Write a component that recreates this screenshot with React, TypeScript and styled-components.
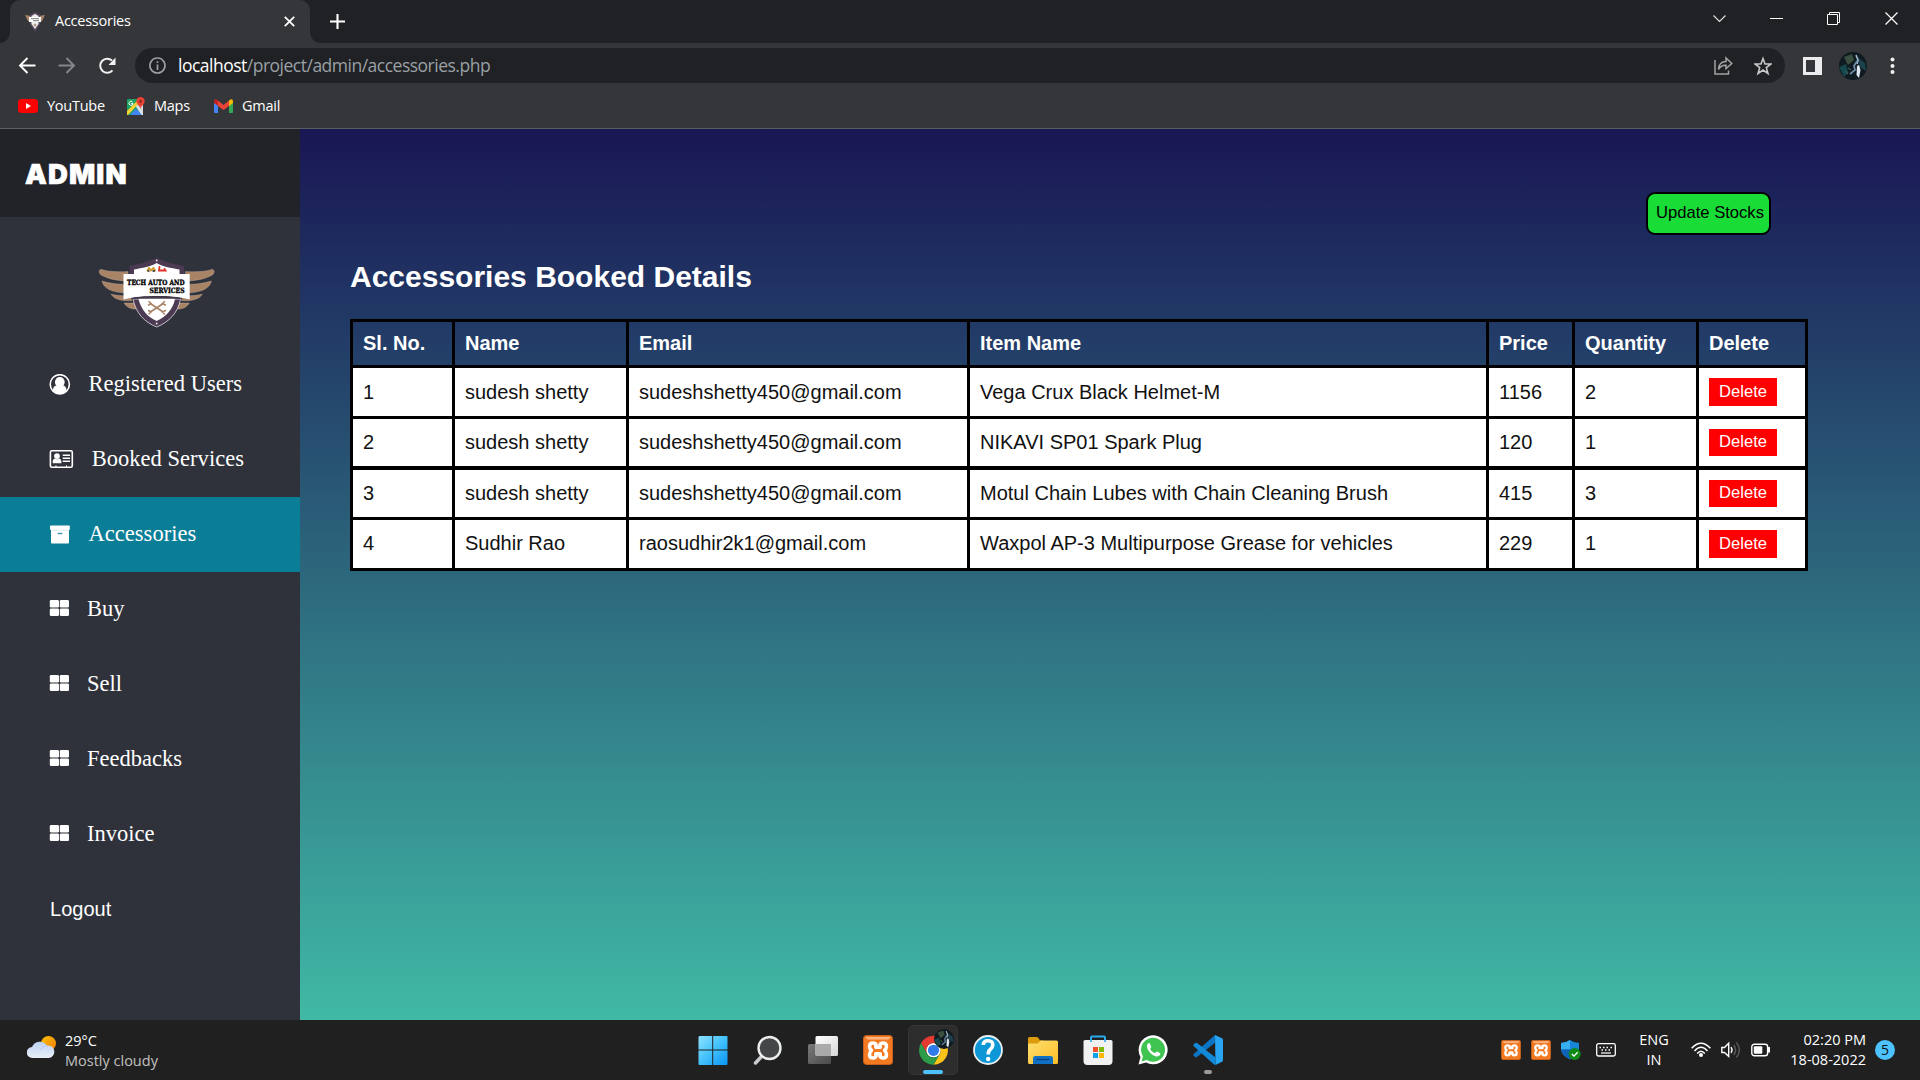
import React from 'react';
import styled, { createGlobalStyle } from 'styled-components';

const UI = `"Open Sans", "Noto Sans", sans-serif`;
const ARIAL = `"Liberation Sans", Arial, sans-serif`;
const TIMES = `"Liberation Serif", "Times New Roman", serif`;

const Global = createGlobalStyle`
  * { box-sizing: border-box; }
  body { margin: 0; background: #202020; }
  svg { display: block; flex: none; }
  button { font: inherit; border: 0; margin: 0; }
`;

const Screen = styled.div`
  width: 1920px;
  height: 1080px;
  display: flex;
  flex-direction: column;
  overflow: hidden;
  font-family: ${UI};
`;

/* ---------- browser chrome ---------- */

const TabStrip = styled.div`
  height: 43px;
  display: flex;
  background: #202124;
`;

const Tab = styled.div`
  position: relative;
  width: 300px;
  height: 43px;
  margin-left: 10px;
  padding: 0 15px 0 15px;
  display: flex;
  align-items: center;
  background: #35363a;
  border-radius: 10px 10px 0 0;
  &::before, &::after {
    content: '';
    position: absolute;
    bottom: 0;
    width: 10px;
    height: 10px;
  }
  &::before {
    left: -10px;
    background: radial-gradient(circle at 0 0, transparent 9.5px, #35363a 10px);
  }
  &::after {
    right: -10px;
    background: radial-gradient(circle at 100% 0, transparent 9.5px, #35363a 10px);
  }
`;

const TabTitle = styled.span`
  flex: 1;
  margin-left: 10px;
  color: #fff;
  font-size: 14.5px;
  line-height: 20px;
  letter-spacing: -0.25px;
  padding-bottom: 1px;
`;

const NewTab = styled.div`
  flex: 1;
  display: flex;
  padding: 14px 0 0 20px;
`;

const WindowButtons = styled.div`
  display: flex;
  gap: 44px;
  padding: 12px 22px 0 0;
`;

const Toolbar = styled.div`
  height: 45px;
  display: flex;
  align-items: center;
  padding: 0 18px 0 18px;
  background: #35363a;
`;

const NavButtons = styled.div`
  display: flex;
  gap: 22px;
  width: 117px;
`;

const Omnibox = styled.div`
  width: 1650px;
  height: 35px;
  display: flex;
  align-items: center;
  padding: 0 13px 0 14px;
  border-radius: 18px;
  background: #202124;
`;

const Url = styled.span`
  flex: 1;
  margin-left: 12px;
  padding-bottom: 1px;
  color: #9aa0a6;
  font-size: 17.5px;
  line-height: 24px;
  letter-spacing: -0.5px;
  b { color: #fff; font-weight: 400; }
`;

const OmniActions = styled.div`
  display: flex;
  gap: 20px;
`;

const ToolbarEnd = styled.div`
  display: flex;
  align-items: center;
  margin-left: 18px;
`;

const Bookmarks = styled.div`
  height: 41px;
  display: flex;
  align-items: center;
  gap: 21px;
  padding: 0 18px 5px;
  background: #35363a;
  border-bottom: 1px solid #5d5e62;
`;

const Bookmark = styled.div<{ $w: number }>`
  width: ${(p) => p.$w}px;
  display: flex;
  align-items: center;
  gap: 9px;
  color: #fff;
  font-size: 14.5px;
  line-height: 20px;
  letter-spacing: -0.25px;
  white-space: nowrap;
`;

/* ---------- page ---------- */

const Page = styled.div`
  height: 891px;
  display: flex;
`;

const Sidebar = styled.aside`
  width: 300px;
  background: #2f323b;
`;

const Brand = styled.div`
  height: 88px;
  padding-left: 25px;
  background: #222328;
  color: #fff;
  font: 900 27.5px/90px Inter, sans-serif;
  letter-spacing: 1.1px;
  -webkit-text-stroke: 0.6px #fff;
`;

const LogoBox = styled.div`
  height: 130px;
  padding: 40px 0 0 98px;
`;

const Item = styled.div<{ $active?: boolean }>`
  height: 75px;
  display: flex;
  align-items: center;
  gap: 17px;
  padding-left: 49px;
  color: #fff;
  font: 22.5px/26px ${TIMES};
  letter-spacing: 0.03px;
  background: ${(p) => (p.$active ? '#0b7e97' : 'transparent')};
`;

const ItemLabel = styled.span`
  padding-bottom: 2px;
`;

const Logout = styled(Item)`
  padding-left: 50px;
  font: 20px/24px ${ARIAL};
`;

const Content = styled.main`
  flex: 1;
  padding: 63px 112px 0 50px;
  background: linear-gradient(to bottom, #191654, #43c6ac 962px);
  display: flex;
  flex-direction: column;
  font-family: ${ARIAL};
`;

const UpdateButton = styled.button`
  align-self: flex-end;
  width: 125px;
  height: 43px;
  margin-right: 37px;
  padding: 0 0 2px 3px;
  border: 2px solid #000;
  border-radius: 9px;
  background: #19dc37;
  color: #000;
  font-size: 16.6px;
  white-space: nowrap;
`;

const Heading = styled.h1`
  margin: 25px 0 0;
  height: 59px;
  color: #fff;
  font-size: 30px;
  line-height: 34px;
`;

const Table = styled.div`
  width: 1458px;
  border-right: 3px solid #000;
  border-bottom: 3px solid #000;
`;

const Row = styled.div<{ $h: number; $line?: number; $head?: boolean }>`
  display: grid;
  grid-template-columns: 102px 174px 341px 519px 86px 124px 109px;
  height: ${(p) => p.$h + (p.$line ?? 3)}px;
  border-top: ${(p) => p.$line ?? 3}px solid #000;
  background: ${(p) => (p.$head ? 'transparent' : '#fff')};
  color: ${(p) => (p.$head ? '#fff' : '#111')};
  font-weight: ${(p) => (p.$head ? 700 : 400)};
`;

const Cell = styled.div`
  display: flex;
  align-items: flex-start;
  padding: 10px 0 0 10px;
  border-left: 3px solid #000;
  font-size: 20px;
  line-height: 23px;
  white-space: nowrap;
`;

const TextCell = styled(Cell)<{ $top: number }>`
  padding-top: ${(p) => p.$top}px;
`;

const DeleteButton = styled.button<{ $h: number }>`
  width: 68px;
  height: ${(p) => p.$h}px;
  padding: 0 0 1px;
  background: #f00;
  color: #fff;
  font-size: 16.6px;
  line-height: 20px;
`;

/* ---------- taskbar ---------- */

const Taskbar = styled.footer`
  height: 60px;
  display: flex;
  background: #202020;
  color: #fff;
`;

const Weather = styled.div`
  width: 696px;
  display: flex;
  padding: 11px 0 0 27px;
  gap: 9px;
`;

const Lines = styled.div<{ $align?: string }>`
  display: flex;
  flex-direction: column;
  align-items: ${(p) => p.$align ?? 'flex-start'};
  font-size: 14.5px;
  line-height: 20px;
  white-space: nowrap;
`;

const Muted = styled.span`
  color: #c0c0c0;
`;

const WeatherIcon = styled.div`
  padding-top: 5px;
`;

const Apps = styled.div`
  display: flex;
  gap: 5px;
  padding-top: 5px;
  margin-left: -8px;
  flex: 1;
`;

const AppTile = styled.div<{ $active?: boolean }>`
  width: 50px;
  height: 50px;
  display: flex;
  flex-direction: column;
  align-items: center;
  padding-top: ${(p) => (p.$active ? 9 : 10)}px;
  border-radius: 5px;
  background: ${(p) => (p.$active ? '#2d2d2d' : 'transparent')};
  border: ${(p) => (p.$active ? '1px solid #353535' : '0')};
  position: relative;
`;

const Indicator = styled.i<{ $w: number; $color: string }>`
  width: ${(p) => p.$w}px;
  height: 4px;
  margin-top: 5px;
  border-radius: 2px;
  background: ${(p) => p.$color};
`;

const ProfileBadge = styled.span`
  position: absolute;
  top: 3px;
  right: 3px;
`;

const Tray = styled.div`
  display: flex;
  align-items: center;
  padding-right: 25px;
`;

const TrayIcons = styled.div<{ $gap: number; $ml?: number }>`
  display: flex;
  align-items: center;
  gap: ${(p) => p.$gap}px;
  margin-left: ${(p) => p.$ml ?? 0}px;
`;

const Language = styled(Lines)`
  width: 28px;
  margin-left: 24px;
`;

const Clock = styled(Lines)`
  margin-left: 19px;
  width: 76px;
`;

const Count = styled.div`
  width: 20px;
  height: 20px;
  margin-left: 9px;
  border-radius: 50%;
  background: #4cc2ff;
  color: #111;
  font-size: 14px;
  line-height: 20px;
  text-align: center;
`;

/* ---------- drawings ---------- */

const feathers = [
  'M30 14.500 C18 15 9 14.500 4 12.500 C1 12 0 15 3 18 C11 22.500 21 24 30 24Z',
  'M30 27 C20 27.500 12 26.500 4 24 C5 31 14 36 30 36Z',
  'M32 38.500 C24 39 18 38.500 13 37 C16 42.500 24 44.500 34 43.500Z',
  'M36 46 L26 46 C29 51 34 52.500 39 52Z',
];

const Wing = () => (
  <g fill="#a98366" stroke="#d6c5b6" strokeWidth=".3">
    {feathers.map((d) => <path key={d} d={d} />)}
  </g>
);

const Logo = ({ w = 117, h = 72 }: { w?: number; h?: number }) => (
  <svg width={w} height={h} viewBox="0 0 117 72" preserveAspectRatio="none">
    <Wing />
    <g transform="translate(117.4 0) scale(-1 1)"><Wing /></g>
    <path d="M58.700 1 L72 6 L86 9 V18 H31.500 V9 L45 6Z" fill="#4b3a52" />
    <path d="M58.700 6 C53 9.500 44 11 36 12.500 V18 H81.500 V12.500 C73 11 64 9.500 58.700 6Z" fill="#fff" />
    <path d="M35 42 H82.500 C80 56 71 65 58.700 70 C46 65 38 56 35 42Z" fill="#4b3a52" stroke="#e3dfe4" strokeWidth=".8" />
    <path d="M40.500 42 H77 C75 52 68 60 58.700 64 C49 60 43 52 40.500 42Z" fill="#fff" />
    <path d="M25.500 17 H91.700 V42.500 C80 39.500 70 39 58.700 39 C47 39 37 39.500 25.500 42.500Z" fill="#fff" />
    <path d="M35 41.600 C45 39.800 72 39.800 82.500 41.600" stroke="#4b3a52" strokeWidth="1.400" fill="none" />
    <g strokeLinecap="round" fill="none">
      <path d="M53 47 L64.500 54.500 M64.500 47 L53 54.500" stroke="#a98366" strokeWidth="1.800" />
      <path d="M51 44.500 L53 46.500 L50.500 48 M66.500 44.500 L64.500 46.500 L67.500 48 M51 57 L53 55 L50.500 53.500 M66.500 57 L64.500 55 L67.500 53.500" stroke="#a98366" strokeWidth="1.500" />
      <path d="M49.500 13.500 L51 11 L53 13.500 L55.500 11 L57 13.500" stroke="#d1982a" strokeWidth="1.800" />
      <path d="M50 14 h1 M55 14 h1.500" stroke="#222" strokeWidth="1.300" />
      <path d="M61.500 10 L61 13.500 H67.500 L66.500 12" stroke="#e03328" strokeWidth="1.800" />
    </g>
    <circle cx="58.700" cy="3.500" r="1" fill="#ddd" />
    <circle cx="58.700" cy="66.500" r="1" fill="#ddd" />
    <g fontFamily="DejaVu Serif, serif" fontWeight="700" fontSize="7.200" fill="#000" stroke="#000" strokeWidth=".35" textAnchor="end">
      <text x="86.500" y="28.300" textLength="57.500" lengthAdjust="spacingAndGlyphs">TECH AUTO AND</text>
      <text x="86.500" y="35.500" textLength="35" lengthAdjust="spacingAndGlyphs">SERVICES</text>
    </g>
  </svg>
);

const Favicon = () => (
  <svg width="20" height="20" viewBox="0 0 20 20">
    <path d="M0 3 L6 4 V11 L3 9Z M20 3 L14 4 V11 L17 9Z" fill="#a98366" />
    <path d="M10 0 L15 3 V12 L10 19.500 L5 12 V3Z" fill="#5b4a62" />
    <path d="M10 2 L13.500 4 V12 L10 17 L6.500 12 V4Z" fill="#eee" />
    <path d="M4 5 H16 V10 H4Z" fill="#fff" />
    <path d="M6 6.700 h8 M8 8.700 h6" stroke="#777" strokeWidth="1" />
    <circle cx="10" cy="13" r="1.500" fill="#b79c88" />
  </svg>
);

const Line = ({ d, w = 20, h = 20, c = '#fff', s = 2 }: { d: string; w?: number; h?: number; c?: string; s?: number }) => (
  <svg width={w} height={h} viewBox={`0 0 ${w} ${h}`} fill="none" stroke={c} strokeWidth={s}><path d={d} /></svg>
);

const Avatar = ({ size }: { size: number }) => (
  <svg width={size} height={size} viewBox="0 0 28 28">
    <defs>
      <clipPath id={`av${size}`}><circle cx="14" cy="14" r="14" /></clipPath>
      <filter id={`bl${size}`}><feGaussianBlur stdDeviation=".6" /></filter>
    </defs>
    <g clipPath={`url(#av${size})`}>
      <rect width="28" height="28" fill="#0f1b20" />
      <g filter={`url(#bl${size})`}>
        <path d="M0 15 L7 12 L9 20 L5 25Z" fill="#14464d" />
        <path d="M5 5 L13 2 L15 8 L9 13Z" fill="#3a4f3f" />
        <path d="M19 6 L26 11 L27 19 L21 15Z" fill="#1f424d" />
        <path d="M17 3 L19 8 L18 12" stroke="#9db6cb" strokeWidth="1.700" fill="none" />
        <path d="M18 9 L15 14 L16 18 L11 22" stroke="#6c8ca8" strokeWidth="1.700" fill="none" />
        <path d="M18 14 L20 13 L21.500 18 L20 26 L17.500 23Z" fill="#dde8f4" />
        <path d="M9 16 L12 18 M6 19 L9 22" stroke="#375d57" strokeWidth="1.500" />
      </g>
    </g>
  </svg>
);

const YouTube = () => (
  <svg width="20" height="14" viewBox="0 0 20 14"><rect width="20" height="14" rx="3.500" fill="#f00" /><path d="M8 4 L13 7 L8 10Z" fill="#fff" /></svg>
);

const Maps = () => (
  <svg width="18" height="18" viewBox="0 0 18 18">
    <rect x="0" y="2" width="16" height="16" rx="1.500" fill="#1ea362" />
    <path d="M9 9 L16 4 V18 H14Z" fill="#e3e6ea" />
    <path d="M0 14 L12 2 L14 4 L1 18 H0Z" fill="#fbd233" />
    <path d="M0 12 V3.500 Q0 2 1.500 2 H10Z" fill="#1ea362" />
    <path d="M3 18 L9 11.500 L15 18Z" fill="#4285f4" />
    <path d="M9 10 L16 17 V9 L12 6Z" fill="#d8dde2" />
    <path d="M13.500 12 C13 8.500 9.300 7.500 9.300 4.200 A4.200 4.200 0 0 1 17.700 4.200 C17.700 7.500 14 8.500 13.500 12Z" fill="#ea4335" />
    <circle cx="13.500" cy="4.200" r="1.500" fill="#8c2a22" />
    <path d="M5.500 5 A2 2 0 1 0 6 6.500 H4.300" stroke="#fff" strokeWidth="1" fill="none" />
  </svg>
);

const Gmail = () => (
  <svg width="19" height="14" viewBox="0 0 19 14">
    <path d="M0 2 V13 Q0 14 1 14 H4 V5Z" fill="#4285f4" />
    <path d="M19 2 V13 Q19 14 18 14 H15 V5Z" fill="#34a853" />
    <path d="M4 1.500 L9.500 6 L15 1.500 V7 L9.500 11 L4 7Z" fill="#ea4335" />
    <path d="M0 2.500 Q.2 -1 3.500 1 L4 1.500 V7 L0 4Z" fill="#c5221f" />
    <path d="M19 2.500 Q18.800 -1 15.500 1 L15 1.500 V7 L19 4Z" fill="#fbbc04" />
  </svg>
);

const UserCircle = () => (
  <svg width="22.500" height="22" viewBox="0 0 22.500 22">
    <circle cx="10.800" cy="10.300" r="9.600" fill="none" stroke="#fff" strokeWidth="1.600" />
    <ellipse cx="10.800" cy="8.100" rx="4.900" ry="5.100" fill="#fff" />
    <path d="M3.800 16.300 C4.300 13 5.300 11.800 7.300 11.500 Q10.800 13.800 14.300 11.500 C16.100 11.800 17.100 13 17.600 16.300 Q10.800 24 3.800 16.300Z" fill="#fff" />
  </svg>
);

const AddressCard = () => (
  <svg width="25.700" height="19" viewBox="0 0 25.700 19">
    <rect x="1.400" y=".8" width="21.900" height="16.500" rx="1.500" fill="none" stroke="#fff" strokeWidth="1.600" />
    <circle cx="8" cy="6.100" r="2.900" fill="#fff" />
    <path d="M3.700 13.300 V11.300 Q3.900 9.100 5.700 8.500 Q8 9.800 10.300 8.500 Q12.200 9.100 12.400 11.300 V13.300Z" fill="#fff" />
    <path d="M13.700 5.200 H21 M13.700 8.200 H21 M13.700 11.300 H21" stroke="#fff" strokeWidth="1.500" />
    <path d="M7 15.300 v2 M17.500 15.300 v2" stroke="#fff" strokeWidth="1" />
  </svg>
);

const Archive = () => (
  <svg width="22.500" height="20" viewBox="0 0 22.500 20">
    <rect x="1" y=".5" width="19.800" height="4.500" rx=".8" fill="#fff" />
    <path d="M2 5 H20 V17.500 Q20 18.500 19 18.500 H3 Q2 18.500 2 17.500Z" fill="#fff" />
    <path d="M2 5.200 H20" stroke="#c9e3e9" strokeWidth=".7" />
    <path d="M9.200 8.500 h3.600" stroke="#3f98ab" strokeWidth="1.300" strokeLinecap="round" />
  </svg>
);

const Tiles = () => (
  <svg width="20.900" height="19" viewBox="0 0 20.900 19">
    <g fill="#fff">
      <rect x=".8" y="0" width="9.200" height="7.500" rx="1.300" /><rect x="10.800" y="0" width="9.200" height="7.500" rx="1.300" />
      <rect x=".8" y="8.500" width="9.200" height="7.500" rx="1.300" /><rect x="10.800" y="8.500" width="9.200" height="7.500" rx="1.300" />
    </g>
  </svg>
);

const CloudSun = () => (
  <svg width="29" height="23" viewBox="0 0 29 23">
    <defs>
      <linearGradient id="sun" x2="1" y2="1"><stop stopColor="#fcc204" /><stop offset="1" stopColor="#f07a06" /></linearGradient>
      <linearGradient id="cl" x2="0" y2="1"><stop stopColor="#bcd2f4" /><stop offset="1" stopColor="#e8eef8" /></linearGradient>
    </defs>
    <circle cx="21.500" cy="7.500" r="7.500" fill="url(#sun)" />
    <path d="M5.500 22 A5.500 5.500 0 0 1 5 11 A8.500 8.500 0 0 1 20 9.500 A6.300 6.300 0 0 1 22 22Z" fill="url(#cl)" />
    <path d="M13 14 Q16 10 20 9.500" stroke="#a9c2ea" strokeWidth=".8" fill="none" />
  </svg>
);

const Windows = () => (
  <svg width="31" height="30" viewBox="0 0 31 30">
    <defs><linearGradient id="wn" x2="1" y2="1"><stop stopColor="#8fe3ff" /><stop offset=".5" stopColor="#43c1fb" /><stop offset="1" stopColor="#0a95f5" /></linearGradient></defs>
    <path d="M1.500 1 H14.200 V14.500 H.500 V2Z M15.200 1 H29 Q29.500 1 29.500 2 V14.500 H15.200Z M.500 15.500 H14.200 V30 H1.500 Q.500 30 .500 29Z M15.200 15.500 H29.500 V29 Q29.500 30 28.500 30 H15.200Z" fill="url(#wn)" />
  </svg>
);

const Search = () => (
  <svg width="30" height="30" viewBox="0 0 30 30">
    <path d="M9.500 20.500 L2.500 28" stroke="#c9cccf" strokeWidth="3.500" strokeLinecap="round" />
    <circle cx="16.500" cy="13" r="11" fill="#454648" stroke="#eceeef" strokeWidth="2.400" />
  </svg>
);

const TaskView = () => (
  <svg width="30" height="30" viewBox="0 0 30 30">
    <defs>
      <linearGradient id="tv" x2="1" y2="1"><stop stopColor="#fff" /><stop offset="1" stopColor="#d6d6d6" /></linearGradient>
      <linearGradient id="tw" x2="1" y2="1"><stop stopColor="#7a7a7a" /><stop offset="1" stopColor="#4a4a4a" /></linearGradient>
    </defs>
    <rect x="0" y="9" width="23" height="20" rx="1.500" fill="url(#tw)" />
    <rect x="7.500" y="1" width="22.500" height="20" rx="1.500" fill="url(#tv)" />
    <path d="M7.500 9 H23 V21 H9 Q7.500 21 7.500 19.500Z" fill="#aaa" />
  </svg>
);

const Xampp = ({ s = 30 }: { s?: number }) => (
  <svg width={s} height={s} viewBox="0 0 30 30">
    <rect x=".5" y=".5" width="29" height="29" rx="3" fill="#f47a22" stroke="#c9601b" />
    <path d="M2 2 H28 L25 4.500 H5Z" fill="#fbb584" />
    <g fill="none" stroke="#fff" strokeWidth="3.500" strokeLinejoin="round" strokeLinecap="round">
      <path d="M12.800 9.500 Q12.500 8 10 8 Q6.500 8 6.500 11.500 Q6.500 14 8.500 15.300 Q6.500 17 6.500 19.500 Q6.500 23 10 23 Q12.500 23 12.800 21.300" />
      <path d="M17.200 9.500 Q17.500 8 20 8 Q23.500 8 23.500 11.500 Q23.500 14 21.500 15.300 Q23.500 17 23.500 19.500 Q23.500 23 20 23 Q17.500 23 17.200 21.300" />
      <path d="M12.800 9.500 V12.300 H17.200 V9.500 M12.800 21.300 V18.700 H17.200 V21.300" />
    </g>
  </svg>
);

const Chrome = () => (
  <svg width="29" height="30" viewBox="0 -1 48 49">
    <circle cx="24" cy="24" r="12" fill="#fff" />
    <path d="M24 12 H44.780 A24 24 0 0 0 3.220 12 L13.600 30 A12 12 0 0 1 24 12Z" fill="#e53a30" />
    <path d="M44.780 12 H24 A12 12 0 0 1 34.390 30 L24 48 A24 24 0 0 0 44.780 12Z" fill="#fcc419" />
    <path d="M3.220 12 L13.600 30 A12 12 0 0 0 34.390 30 L24 48 A24 24 0 0 1 3.220 12Z" fill="#2c9c49" />
    <circle cx="24" cy="24" r="9.300" fill="#2f7bea" />
  </svg>
);

const Help = () => (
  <svg width="30" height="30" viewBox="0 0 30 30">
    <circle cx="15" cy="15" r="14" fill="#0d97d6" stroke="#e9eef1" strokeWidth="1.800" />
    <path d="M10.300 10 Q10.500 5.800 15 5.800 Q19.800 5.800 19.800 10 Q19.800 12.500 17.200 14.500 Q15.200 16 15.200 19.500" fill="none" stroke="#fff" strokeWidth="3.600" />
    <circle cx="15.200" cy="24" r="2.200" fill="#fff" />
  </svg>
);

const Explorer = () => (
  <svg width="30" height="30" viewBox="0 0 30 30">
    <defs><linearGradient id="ex" x2="1" y2="1"><stop stopColor="#ffdf70" /><stop offset="1" stopColor="#fcbd27" /></linearGradient></defs>
    <path d="M0 3.500 Q0 2 1.500 2 H9 Q10.500 2 12 5.500 H15 V12 H0Z" fill="#dd9c0c" />
    <path d="M0 8.500 H9 Q11 8 12.500 5.500 H28.500 Q30 5.500 30 7 V27.500 Q30 29 28.500 29 H1.500 Q0 29 0 27.500Z" fill="url(#ex)" />
    <path d="M5 29 V23.500 Q5 21 7.500 21 H22.500 Q25 21 25 23.500 V29Z" fill="#0f70c4" />
    <path d="M8.500 24.500 H21.500" stroke="#0a3f7d" strokeWidth="1.200" />
  </svg>
);

const Store = () => (
  <svg width="31" height="30" viewBox="0 0 31 30">
    <path d="M8 6 V2.500 Q8 1.500 9 1.500 H21 Q22 1.500 22 2.500 V6" stroke="#2da9ea" strokeWidth="2" fill="none" />
    <path d="M.500 6.500 Q.500 5 2 5 H28 Q29.500 5 29.500 6.500 V26 Q29.500 30 25.500 30 H4.500 Q.500 30 .500 26Z" fill="#f1f1f1" />
    <path d="M8 4.500 V7 M22 4.500 V7" stroke="#2da9ea" strokeWidth="1.600" />
    <path d="M10 12 h5 v5 h-5Z" fill="#f0502a" /><path d="M16 12 h5 v5 h-5Z" fill="#7fba0a" />
    <path d="M10 18 h5 v5 h-5Z" fill="#08a0e8" /><path d="M16 18 h5 v5 h-5Z" fill="#fdb90b" />
  </svg>
);

const WhatsApp = () => (
  <svg width="30" height="30" viewBox="0 0 30 30">
    <path d="M.500 29.500 L2.500 22 A14.500 14.500 0 1 1 8 27.500Z" fill="#fff" />
    <path d="M3.500 26.500 L5 21.300 A12 12 0 1 1 8.800 25Z" fill="#3fc351" />
    <path d="M11.500 8 Q10.500 7.800 9.500 9 Q8 11 9.500 14 Q12.500 19.500 17.500 21.300 Q20.500 22 22 20 Q22.800 18.500 22 18 L19 16.500 Q18.300 16.500 17.500 17.800 Q16.700 18.300 15.500 17.500 Q13 16 12.200 14 Q12.200 13.500 13 12.800 Q13.300 12 13 11Z" fill="#fff" />
  </svg>
);

const VsCode = () => (
  <svg width="30" height="30" viewBox="0 0 30 30">
    <path d="M22 0 L29 3.300 Q30 3.800 30 5 V25 Q30 26.200 29 26.700 L22.500 30Z" fill="#27a5f2" />
    <path d="M22 0 V8 L4 22 Q3 22.600 2.200 22 L.600 20.500 Q0 19.800 .600 19Z" fill="#0b75c4" />
    <path d="M22.500 30 V22 L4 8 Q3 7.400 2.200 8 L.600 9.500 Q0 10.200 .600 11 L21 29.500Z" fill="#138ad8" />
    <path d="M22 8 V22 L13 15Z" fill="#202020" />
  </svg>
);

const Shield = () => (
  <svg width="20" height="20" viewBox="0 0 20 20">
    <path d="M9 0 Q13 3 18 3 V9 Q18 15.500 9 19.500 Q0 15.500 0 9 V3 Q5 3 9 0Z" fill="#1685d8" />
    <path d="M9 0 Q5 3 0 3 V9.500 H9Z" fill="#36aef0" /><path d="M9 9.500 H0 Q1 15.500 9 19.500Z" fill="#0e62b4" />
    <circle cx="13.700" cy="14" r="6" fill="#0f8a16" />
    <path d="M10.800 14 L13 16 L16.700 12.200" stroke="#fff" strokeWidth="1.300" fill="none" />
  </svg>
);

const Keyboard = () => (
  <svg width="20" height="14" viewBox="0 0 20 14" fill="none" stroke="#fff">
    <rect x=".7" y=".7" width="18.600" height="12.300" rx="1.800" strokeWidth="1.300" />
    <path d="M3.500 4.500 h1.500 M7 4.500 h1.500 M10.500 4.500 h1.500 M14.500 4.500 h1.500 M5.500 7 h1.500 M9 7 h1.500 M12.500 7 h1.500" strokeWidth="1.300" />
    <path d="M5 10 H15" strokeWidth="1.200" />
  </svg>
);

const Wifi = () => (
  <svg width="20" height="16" viewBox="0 0 20 16" fill="none" stroke="#fff" strokeWidth="1.500">
    <path d="M.600 6.300 Q10 -4 19.400 6.300 M3.500 9 Q10 1.500 16.500 9 M6.200 11.500 Q10 7 13.800 11.500" />
    <circle cx="10" cy="13" r="2" fill="#fff" stroke="none" />
  </svg>
);

const Volume = () => (
  <svg width="20" height="18" viewBox="0 0 20 18" fill="none" stroke="#fff" strokeWidth="1.400">
    <path d="M.800 6.500 H3.500 L7.700 2.200 V15.300 L3.500 11.500 H.800Z" />
    <path d="M10 6.200 Q12 9 10 11.800" />
    <path d="M12.700 4 Q16.500 9 12.700 14 M15.300 1.500 Q21.500 9 15.300 16.500" stroke="#5a5a5a" />
  </svg>
);

const Battery = () => (
  <svg width="20" height="14" viewBox="0 0 20 14">
    <rect x=".8" y="1.200" width="15.800" height="11.500" rx="2.500" fill="none" stroke="#fff" strokeWidth="1.400" />
    <rect x="2.800" y="3.200" width="8.500" height="7.500" rx="1" fill="#fff" />
    <path d="M18 4.800 v4" stroke="#fff" strokeWidth="2" strokeLinecap="round" />
  </svg>
);

/* ---------- data ---------- */

const menu = [
  { label: 'Registered Users', icon: <UserCircle /> },
  { label: 'Booked Services', icon: <AddressCard /> },
  { label: 'Accessories', icon: <Archive />, active: true },
  { label: 'Buy', icon: <Tiles /> },
  { label: 'Sell', icon: <Tiles /> },
  { label: 'Feedbacks', icon: <Tiles /> },
  { label: 'Invoice', icon: <Tiles /> },
];

const columns = ['Sl. No.', 'Name', 'Email', 'Item Name', 'Price', 'Quantity', 'Delete'];

const bookings = [
  { h: 48, line: 3, top: 13, btn: 28, cells: ['1', 'sudesh shetty', 'sudeshshetty450@gmail.com', 'Vega Crux Black Helmet-M', '1156', '2'] },
  { h: 47, line: 3, top: 12, btn: 27, cells: ['2', 'sudesh shetty', 'sudeshshetty450@gmail.com', 'NIKAVI SP01 Spark Plug', '120', '1'] },
  { h: 47, line: 4, top: 12, btn: 27, cells: ['3', 'sudesh shetty', 'sudeshshetty450@gmail.com', 'Motul Chain Lubes with Chain Cleaning Brush', '415', '3'] },
  { h: 48, line: 3, top: 12, btn: 28, cells: ['4', 'Sudhir Rao', 'raosudhir2k1@gmail.com', 'Waxpol AP-3 Multipurpose Grease for vehicles', '229', '1'] },
];

export default function App() {
  return (
    <Screen>
      <Global />
      <TabStrip>
        <Tab>
          <Favicon />
          <TabTitle>Accessories</TabTitle>
          <Line w={11} h={11} d="M.8 .8 L10.200 10.200 M10.200 .8 L.8 10.200" s={1.8} />
        </Tab>
        <NewTab><Line w={15} h={15} d="M7.500 0 V15 M0 7.500 H15" s={2.1} /></NewTab>
        <WindowButtons>
          <Line w={13} h={13} d="M.5 3.500 L6.500 9.500 L12.500 3.500" s={1.1} c="#e4e4e4" />
          <Line w={13} h={13} d="M0 6.500 H13" s={1} />
          <Line w={14} h={13} d="M.5 2.500 H10.500 V12.500 H.5Z M2.500 2.500 V.5 H12.500 V10.500 H10.500" s={1} />
          <Line w={13} h={13} d="M.5 .5 L12.500 12.500 M12.500 .5 L.5 12.500" s={1.2} />
        </WindowButtons>
      </TabStrip>
      <Toolbar>
        <NavButtons>
          <Line w={18} h={18} d="M17.500 8.500 H2.500 M9.500 1 L2 8.500 L9.500 16" s={1.9} />
          <Line w={18} h={18} d="M.5 8.500 H15.500 M8.500 1 L16 8.500 L8.500 16" c="#85868a" s={1.9} />
          <svg width="19" height="18" viewBox="0 0 19 18">
            <path d="M14.500 13.300 A7 7 0 1 1 14 3.600" fill="none" stroke="#f0f0f0" strokeWidth="2" />
            <path d="M17.500 .5 V8 H10.500Z" fill="#f0f0f0" />
          </svg>
        </NavButtons>
        <Omnibox>
          <Line w={17} h={17} d="M8.500 1 A7.500 7.500 0 1 1 8.400 1 M8.500 4.300 V6 M8.500 7.500 V13" c="#9aa0a6" s={1.7} />
          <Url><b>localhost</b>/project/admin/accessories.php</Url>
          <OmniActions>
            <Line w={21} h={20} d="M2 4 V18 H15.500 V14.500 M5.500 13.500 Q6 5.500 13 5.500 V2 L18.800 7.500 L13 12.500 V9.300 Q8 9 5.500 13.500Z" c="#a2a3a5" s={1.5} />
            <Line w={18} h={20} d="M9 2.500 L11 8 H17 L12.300 11.600 L14 17.500 L9 14 L4 17.500 L5.700 11.600 L1 8 H7Z" c="#c6c7c8" s={1.6} />
          </OmniActions>
        </Omnibox>
        <ToolbarEnd>
          <svg width="19" height="18" viewBox="0 0 19 18"><path d="M0 0 H19 V18 H0Z M3 3 V15 H12 V3Z" fill="#ececee" fillRule="evenodd" /></svg>
          <TrayIcons $gap={23} $ml={17}>
            <Avatar size={28} />
            <svg width="5" height="18" viewBox="0 0 5 18" fill="#f0f0f0"><circle cx="2.500" cy="2.500" r="2" /><circle cx="2.500" cy="9" r="2" /><circle cx="2.500" cy="15" r="2" /></svg>
          </TrayIcons>
        </ToolbarEnd>
      </Toolbar>
      <Bookmarks>
        <Bookmark $w={88}><YouTube />YouTube</Bookmark>
        <Bookmark $w={66}><Maps />Maps</Bookmark>
        <Bookmark $w={80}><Gmail />Gmail</Bookmark>
      </Bookmarks>

      <Page>
        <Sidebar>
          <Brand>ADMIN</Brand>
          <LogoBox><Logo /></LogoBox>
          {menu.map((m) => (
            <Item key={m.label} $active={m.active}>{m.icon}<ItemLabel>{m.label}</ItemLabel></Item>
          ))}
          <Logout><ItemLabel>Logout</ItemLabel></Logout>
        </Sidebar>
        <Content>
          <UpdateButton>Update Stocks</UpdateButton>
          <Heading>Accessories Booked Details</Heading>
          <Table>
            <Row $h={43} $head>{columns.map((c) => <Cell key={c}>{c}</Cell>)}</Row>
            {bookings.map((b) => (
              <Row key={b.cells[0]} $h={b.h} $line={b.line}>
                {b.cells.map((c, i) => <TextCell key={i} $top={b.top}>{c}</TextCell>)}
                <Cell><DeleteButton $h={b.btn}>Delete</DeleteButton></Cell>
              </Row>
            ))}
          </Table>
        </Content>
      </Page>

      <Taskbar>
        <Weather>
          <WeatherIcon><CloudSun /></WeatherIcon>
          <Lines><span>29°C</span><Muted>Mostly cloudy</Muted></Lines>
        </Weather>
        <Apps>
          <AppTile><Windows /></AppTile>
          <AppTile><Search /></AppTile>
          <AppTile><TaskView /></AppTile>
          <AppTile><Xampp /></AppTile>
          <AppTile $active><Chrome /><Indicator $w={20} $color="#4cc2ff" /><ProfileBadge><Avatar size={20} /></ProfileBadge></AppTile>
          <AppTile><Help /></AppTile>
          <AppTile><Explorer /></AppTile>
          <AppTile><Store /></AppTile>
          <AppTile><WhatsApp /></AppTile>
          <AppTile><VsCode /><Indicator $w={8} $color="#9a9a9a" /></AppTile>
        </Apps>
        <Tray>
          <TrayIcons $gap={10}><Xampp s={20} /><Xampp s={20} /><Shield /></TrayIcons>
          <TrayIcons $gap={0} $ml={15}><Keyboard /></TrayIcons>
          <Language $align="center"><span>ENG</span><span>IN</span></Language>
          <TrayIcons $gap={10} $ml={23}><Wifi /><Volume /><Battery /></TrayIcons>
          <Clock $align="flex-end"><span>02:20 PM</span><span>18-08-2022</span></Clock>
          <Count>5</Count>
        </Tray>
      </Taskbar>
    </Screen>
  );
}
